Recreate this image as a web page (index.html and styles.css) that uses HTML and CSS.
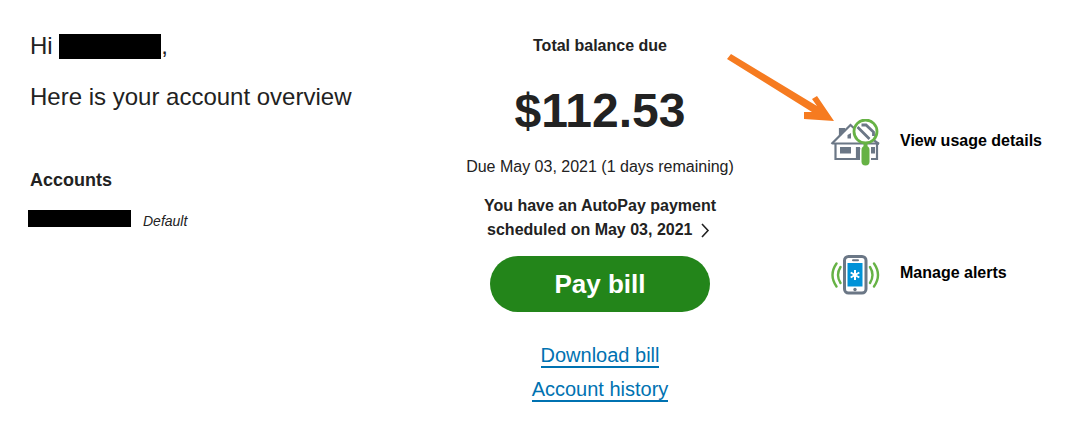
FILE: index.html
```html
<!DOCTYPE html>
<html lang="en">
<head>
<meta charset="utf-8">
<meta name="viewport" content="width=device-width, initial-scale=1">
<title>Account overview</title>
<link rel="stylesheet" href="styles.css">
</head>
<body>
<main class="overview">
  <section class="account">
    <h1 class="greeting">Hi <span class="redacted redacted-name"></span>,</h1>
    <p class="intro">Here is your account overview</p>
    <h2 class="accounts-title">Accounts</h2>
    <div class="account-row">
      <span class="redacted redacted-account"></span>
      <em class="account-tag">Default</em>
    </div>
  </section>

  <section class="billing">
    <h2 class="billing-title">Total balance due</h2>
    <p class="amount">$112.53</p>
    <p class="due">Due May 03, 2021 (1 days remaining)</p>
    <a class="autopay" href="#autopay">You have an AutoPay payment<br>scheduled on May 03, 2021 <svg class="chevron" viewBox="0 0 16 16" aria-hidden="true"><path d="M5 2 L11 8.500 L5 15" fill="none" stroke="#222" stroke-width="1.6"/></svg></a>
    <button class="pay" type="button">Pay bill</button>
    <nav class="bill-links">
      <a class="bill-link" href="#download">Download bill</a>
      <a class="bill-link" href="#history">Account history</a>
    </nav>
  </section>

  <nav class="actions">
    <a class="action" href="#usage">
      <svg class="action-icon" viewBox="0 0 50 50" aria-hidden="true">
        <g fill="none" stroke="#6b7786" stroke-width="2.2">
          <path d="M1.500 25 L20.500 6 L28 13"/>
          <path d="M10 17 V10 H14 V13"/>
          <path d="M3 24.500 H49"/>
          <path d="M5.500 24.500 V40 H47 V24.500"/>
          <path d="M38 17 L49 25"/>
          <path d="M27 40 V29 H30"/>
        </g>
        <path d="M9 9 H15 V12 L9 18 Z M17.500 19.500 V16 L21 14 V19.500 Z M10 28 H21 V34.500 H10 Z M27 29 H31 V40 H27 Z M41 28 H45 V34.500 H41 Z" fill="#6b7786"/>
        <circle cx="35.500" cy="12.500" r="11.500" fill="#fff" stroke="#66b245" stroke-width="2.800"/>
        <path d="M27.500 8 L39.500 20 M31.500 6 H36 L43.500 13 V17" fill="none" stroke="#6b7786" stroke-width="2.800"/>
        <path d="M35.500 31 V42" stroke="#fff" stroke-width="11" stroke-linecap="round"/>
        <path d="M35.500 24 V31" stroke="#66b245" stroke-width="4"/>
        <path d="M35.500 31 V42.500" stroke="#66b245" stroke-width="8" stroke-linecap="round"/>
      </svg>
      <span class="action-label">View usage details</span>
      <svg class="pointer" viewBox="0 0 110 70" aria-hidden="true"><path d="M5 0 L91 52 L86 45 L91 42 L108 67 L78 65 L78 58 L86 58 L1 5 Z" fill="#f67b20"/></svg>
    </a>
    <a class="action" href="#alerts">
      <svg class="action-icon" viewBox="0 0 50 50" aria-hidden="true">
        <rect x="14.500" y="5.500" width="21.500" height="36.500" rx="4" fill="#fff" stroke="#6b7786" stroke-width="3"/>
        <rect x="17.500" y="12" width="15" height="23.500" fill="#0092d8"/>
        <path d="M23 9.300 H28" stroke="#6b7786" stroke-width="2" stroke-linecap="round"/>
        <circle cx="25" cy="38.500" r="1.700" fill="#6b7786"/>
        <path d="M25 19 V29 M20.700 21.500 L29.300 26.500 M29.300 21.500 L20.700 26.500" stroke="#fff" stroke-width="2"/>
        <g fill="none" stroke="#66b245" stroke-width="2.400" stroke-linecap="round">
          <path d="M10.500 16 Q5.500 24 10.500 32 M6.500 12.500 Q-1.500 24 6.500 35.500"/>
          <path d="M40 16 Q45 24 40 32 M44 12.500 Q52 24 44 35.500"/>
        </g>
      </svg>
      <span class="action-label">Manage alerts</span>
    </a>
  </nav>
</main>
</body>
</html>
```
FILE: styles.css
```css
* {
  box-sizing: border-box;
}

body {
  margin: 0;
  background: #fff;
  color: #222;
  font-family: "Liberation Sans", Arial, sans-serif;
  font-size: 16px;
  line-height: 24px;
}

h1,
h2,
p {
  margin: 0;
  font-weight: 400;
}

a {
  color: inherit;
  text-decoration: none;
}

.overview {
  display: grid;
  grid-template-columns: minmax(0, 1fr) 300px 242px;
  column-gap: 80px;
  padding: 32px 0 24px 30px;
}

.greeting,
.intro {
  font-size: 24px;
  line-height: 28px;
}

.greeting {
  display: flex;
  white-space: pre;
}

.redacted {
  display: block;
  background: #000;
}

.redacted-name {
  width: 102px;
  height: 25px;
  margin-top: 2px;
}

.intro {
  margin-top: 23px;
}

.accounts-title {
  margin-top: 57px;
  font-size: 18px;
  font-weight: 700;
}

.account-row {
  display: flex;
  gap: 12px;
  margin: 18px 0 0 -2px;
}

.redacted-account {
  width: 103px;
  height: 17px;
}

.account-tag {
  font-size: 14px;
  line-height: 22px;
}

.billing {
  display: flex;
  flex-direction: column;
  align-items: center;
  text-align: center;
}

.billing-title {
  margin-top: 2px;
  font-size: 16px;
  font-weight: 700;
}

.amount {
  margin-top: 25px;
  font-size: 48px;
  font-weight: 700;
  line-height: 56px;
}

.due {
  margin-top: 16px;
}

.autopay {
  margin-top: 15px;
  font-weight: 700;
}

.chevron {
  width: 16px;
  height: 16px;
  vertical-align: -3px;
}

.pay {
  width: 220px;
  height: 56px;
  margin-top: 14px;
  border: 0;
  border-radius: 28px;
  background: #23851a;
  color: #fff;
  font: 700 26px "Liberation Sans", Arial, sans-serif;
}

.bill-links {
  display: flex;
  flex-direction: column;
  align-items: center;
  gap: 10px;
  margin-top: 32px;
}

.bill-link {
  border-bottom: 2px solid #0072b1;
  color: #0072b1;
  font-size: 20px;
  line-height: 22px;
}

.actions {
  display: flex;
  flex-direction: column;
  gap: 82px;
  padding-top: 87px;
}

.action {
  position: relative;
  display: flex;
  gap: 20px;
  color: #000;
  font-weight: 700;
}

.action-icon {
  width: 50px;
  height: 50px;
}

.action-label {
  padding-top: 10px;
}

.pointer {
  position: absolute;
  top: -65px;
  left: -104px;
  width: 110px;
  height: 70px;
}
```
